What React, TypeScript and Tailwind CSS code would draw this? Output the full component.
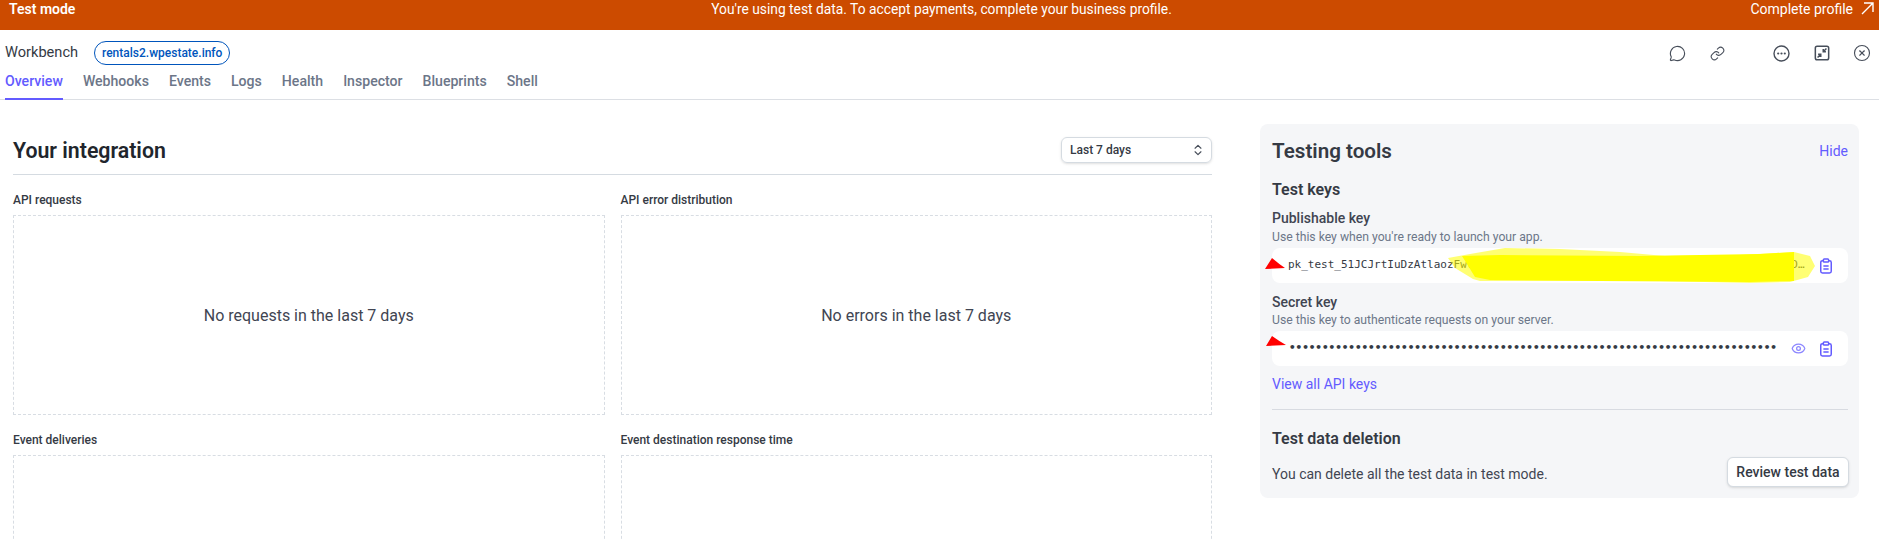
import { ChevronsUpDown, CircleX, Eye, Link, MessageCircle } from "lucide-react";

const tabs = ["Overview", "Webhooks", "Events", "Logs", "Health", "Inspector", "Blueprints", "Shell"];

function ClipboardIcon() {
  return (
    <svg width="14" height="16" viewBox="0 0 16 18" fill="none" stroke="#635bff" strokeWidth="1.7" className="shrink-0">
      <rect x="2" y="3" width="12" height="14" rx="2" />
      <rect x="5" y="1" width="6" height="3.5" rx="1" fill="#ffffff" />
      <path d="M5 9h6M5 12.5h6" />
    </svg>
  );
}

function CompressIcon() {
  return (
    <svg width="16" height="16" viewBox="0 0 18 18" fill="none" stroke="#474e5a" strokeWidth="1.7">
      <rect x="1.5" y="1.5" width="15" height="15" rx="2" />
      <path d="M14 4l-3.6 3.6M10.4 4.6v3h3M4 14l3.6-3.6M7.6 13.4v-3h-3" />
    </svg>
  );
}

function EllipsisIcon() {
  return (
    <svg width="17" height="17" viewBox="0 0 17 17" fill="none">
      <circle cx="8.5" cy="8.5" r="7.5" stroke="#474e5a" strokeWidth="1.4" />
      <circle cx="5.2" cy="8.5" r="1.1" fill="#474e5a" />
      <circle cx="8.5" cy="8.5" r="1.1" fill="#474e5a" />
      <circle cx="11.8" cy="8.5" r="1.1" fill="#474e5a" />
    </svg>
  );
}

function Chart({ title, empty }: { title: string; empty?: string }) {
  return (
    <div>
      <div className="text-[12px] leading-5 font-medium text-[#353a44] mb-[5px]">{title}</div>
      <div className="h-[200px] border border-dashed border-[#d8dde3] flex items-center justify-center pt-[2px] text-[16px] text-[#414552]">
        {empty}
      </div>
    </div>
  );
}

export default function App() {
  return (
    <div className="h-[540px] w-[1879px] overflow-hidden bg-white font-['Roboto',sans-serif] text-[#353a44]">
      <div className="h-[30px] bg-[#cc4b00] text-white text-[14px] leading-4 grid grid-cols-[1fr_auto_1fr] pt-px pl-[9px] pr-[5px]">
        <span className="font-semibold">Test mode</span>
        <span className="text-[13.8px]">You're using test data. To accept payments, complete your business profile.</span>
        <span className="flex items-start justify-end">
          Complete profile
          <svg width="13" height="13" viewBox="0 0 13 13" fill="none" stroke="#ffffff" strokeWidth="1.4" className="ml-[8px] mt-[1px]">
            <path d="M1 12L12 1M3 1h9v9" />
          </svg>
        </span>
      </div>

      <div className="h-[70px] border-b border-[#dcdfe4] px-[5px] relative">
        <div className="flex items-center pt-[7px] h-[39px]">
          <span className="text-[14.6px] text-[#353a44]">Workbench</span>
          <span className="ml-4 h-[24px] px-[7px] flex items-center rounded-full border border-[#0055bc] text-[12px] font-medium text-[#0055bc]">
            rentals2.wpestate.info
          </span>
          <div className="ml-auto flex items-center text-[#474e5a] pr-[3px]">
            <MessageCircle size={17} strokeWidth={1.6} />
            <Link size={15} strokeWidth={1.7} className="ml-6" />
            <span className="ml-[48px] flex"><EllipsisIcon /></span>
            <span className="ml-[24px] flex"><CompressIcon /></span>
            <CircleX size={18} strokeWidth={1.5} className="ml-[23px]" />
          </div>
        </div>
        <div className="flex gap-5 h-[31px]">
          {tabs.map((t, i) => (
            <div
              key={t}
              className={
                i === 0
                  ? "text-[14.1px] font-medium leading-5 pt-[2px] h-[31px] border-b-2 border-[#635bff] text-[#635bff]"
                  : "text-[14.1px] font-medium leading-5 pt-[2px] text-[#6c7688]"
              }
            >
              {t}
            </div>
          ))}
        </div>
      </div>

      <div className="flex items-start">
        <div className="ml-[13px] w-[1199px] pt-[37px]">
          <div className="flex items-center justify-between h-[26px]">
            <h1 className="text-[21.3px] font-semibold text-[#21252c] pt-px">Your integration</h1>
            <div className="w-[151px] h-[26px] rounded-md border border-[#d5dbe1] shadow-sm flex items-center justify-between pl-[8px] pr-[6px] text-[12px] font-medium text-[#353a44]">
              Last 7 days
              <ChevronsUpDown size={14} strokeWidth={2} className="text-[#474e5a]" />
            </div>
          </div>
          <div className="mt-[11px] border-t border-[#d5dbe1]" />
          <div className="grid grid-cols-2 gap-x-4 gap-y-[15px] pt-[15px]">
            <Chart title="API requests" empty="No requests in the last 7 days" />
            <Chart title="API error distribution" empty="No errors in the last 7 days" />
            <Chart title="Event deliveries" />
            <Chart title="Event destination response time" />
          </div>
        </div>

        <div className="ml-[48px] w-[599px] mt-[24px]">
          <div className="rounded-lg bg-[#f5f6f8] pl-3 pr-[11px] pt-[13px] pb-[11px]">
            <div className="flex items-center justify-between h-7">
              <h2 className="text-[20.6px] font-semibold text-[#353a44]">Testing tools</h2>
              <span className="text-[14px] text-[#635bff]">Hide</span>
            </div>
            <div className="mt-[13px] text-[16px] leading-6 font-semibold text-[#353a44]">Test keys</div>

            <div className="mt-[6px] text-[14px] leading-5 font-medium text-[#414552]">Publishable key</div>
            <div className="mt-px text-[12.2px] leading-4 text-[#6c7688]">Use this key when you're ready to launch your app.</div>
            <div className="mt-[3px] h-[35px] rounded-lg bg-white relative flex items-center pl-4 pr-[15px]">
              <span className="w-[518px] truncate font-['DejaVu_Sans_Mono',monospace] text-[11px] text-[#353a44]">
                pk_test_51JCJrtIuDzAtlaozFwvPHxqYtR8mKe2LdVnWb7sGfA0cUo3ZiTj9NhQy6EpMl4XrBk1DwSa5OgCu8IvKtYe2HzRn7PfLm0JqXc
              </span>
              <span className="ml-auto flex"><ClipboardIcon /></span>
              <svg width="22" height="13" viewBox="0 0 22 13" className="absolute left-[-8px] top-[9px]">
                <path d="M1 12L8 1q7 6 13 10z" fill="#ff0000" />
              </svg>
              <svg width="380" height="40" viewBox="0 0 380 40" className="absolute left-[170px] top-[-2px]">
                <path d="M6 12L28 8L63 2L118 3L178 6L223 10L298 9L352 6L368 10L373 20L366 31L348 36L308 37L218 35L38 35L31 33L13 22Z" fill="#ffff00" fillOpacity="0.55" />
                <path d="M20 10L58 9L198 10L318 8L352 6L352 35L308 36L158 35L48 34L33 31Z" fill="#ffff00" />
              </svg>
            </div>

            <div className="mt-[9px] text-[14px] leading-5 font-medium text-[#414552]">Secret key</div>
            <div className="text-[12.2px] leading-4 text-[#6c7688]">Use this key to authenticate requests on your server.</div>
            <div className="mt-[3px] h-[35px] rounded-lg bg-white relative flex items-center pl-[17px] pr-[15px]">
              <span className="font-['DejaVu_Sans_Mono',monospace] text-[11px] tracking-[-0.03px] text-[#353a44] font-bold whitespace-nowrap">
                {"•".repeat(74)}
              </span>
              <Eye size={15} strokeWidth={2} className="ml-auto mr-[13px] text-[#8b85ff]" />
              <ClipboardIcon />
              <svg width="22" height="12" viewBox="0 0 22 12" className="absolute left-[-7px] top-[4px]">
                <path d="M1 11L7 1q7 5 14 9z" fill="#ff0000" />
              </svg>
            </div>

            <div className="mt-2 text-[14px] leading-5 text-[#635bff]">View all API keys</div>
            <div className="mt-[15px] border-t border-[#d8dbe1]" />
            <div className="mt-[17px] text-[16px] leading-6 font-semibold text-[#353a44]">Test data deletion</div>
            <div className="mt-[6px] flex items-center justify-between">
              <span className="text-[14px] text-[#414552] pt-[4px]">You can delete all the test data in test mode.</span>
              <button className="h-[30px] w-[122px] -mr-px rounded-md bg-white border border-[#d5dbe1] shadow-sm text-[14px] font-medium text-[#353a44]">
                Review test data
              </button>
            </div>
          </div>
          <h2 className="mt-[36px] pl-3 text-[20px] leading-7 font-semibold text-[#21252c]">Guides</h2>
        </div>
      </div>
    </div>
  );
}
